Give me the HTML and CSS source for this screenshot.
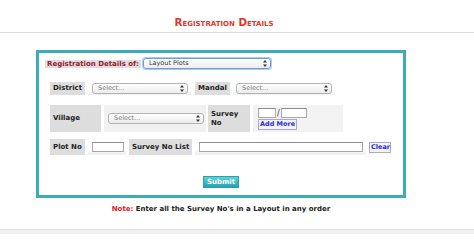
FILE: index.html
```html
<!DOCTYPE html>
<html>
<head>
<meta charset="utf-8">
<link rel="stylesheet" href="styles.css">
</head>
<body>
<header class="top">
  <h1 class="title">Registration Details</h1>
</header>
<main class="wrap">
  <form class="box">
    <div class="row-of">
      <span class="of-label">Registration Details of:</span>
      <span class="sel-wrap sel-of">
        <select class="sel focus"><option>Layout Plots</option></select>
        <svg class="arr" width="4" height="7" viewBox="0 0 4 7"><path d="M2 0L4 2.6H0Z M2 7L0 4.4H4Z" fill="#333"/></svg>
      </span>
    </div>

    <div class="row r-district">
      <div class="lab w35">District</div>
      <div class="val v-district">
        <span class="sel-wrap">
          <select class="sel"><option>Select...</option></select>
          <svg class="arr" width="4" height="7" viewBox="0 0 4 7"><path d="M2 0L4 2.6H0Z M2 7L0 4.4H4Z" fill="#333"/></svg>
        </span>
      </div>
      <div class="lab w35">Mandal</div>
      <div class="val v-mandal">
        <span class="sel-wrap">
          <select class="sel"><option>Select...</option></select>
          <svg class="arr" width="4" height="7" viewBox="0 0 4 7"><path d="M2 0L4 2.6H0Z M2 7L0 4.4H4Z" fill="#333"/></svg>
        </span>
      </div>
    </div>

    <div class="row r-village">
      <div class="lab w51">Village</div>
      <div class="val v-village">
        <span class="sel-wrap">
          <select class="sel"><option>Select...</option></select>
          <svg class="arr" width="4" height="7" viewBox="0 0 4 7"><path d="M2 0L4 2.6H0Z M2 7L0 4.4H4Z" fill="#333"/></svg>
        </span>
      </div>
      <div class="lab w42 two">Survey<br>No</div>
      <div class="val v-survey">
        <div class="pair">
          <input class="inp w18" type="text"><span class="slash">/</span><input class="inp w26" type="text">
        </div>
        <button type="button" class="btn-small">Add More</button>
      </div>
    </div>

    <div class="row r-plot">
      <div class="lab w35">Plot No</div>
      <div class="val v-plot"><input class="inp w32" type="text"></div>
      <div class="lab w63">Survey No List</div>
      <div class="val v-list"><input class="inp w164" type="text"></div>
      <button type="button" class="btn-small clear">Clear</button>
    </div>

    <div class="actions">
      <button type="button" class="submit">Submit</button>
    </div>
  </form>
  <p class="note"><span class="note-l">Note:</span> Enter all the Survey No's in a Layout in any order</p>
</main>
<footer class="foot"></footer>
</body>
</html>
```

FILE: styles.css
```css
* { box-sizing: border-box; }
html, body { margin: 0; padding: 0; background: #fff; }
body {
  width: 474px;
  height: 234px;
  overflow: hidden;
  font-family: "DejaVu Sans", Verdana, sans-serif;
  font-size: 7px;
  color: #222;
  position: relative;
}
.top {
  height: 33px;
  border-bottom: 1px solid #dcdcdc;
  display: flex;
  justify-content: center;
  align-items: flex-end;
  padding-right: 26px;
}
.title {
  margin: 0 0 4px 0;
  font-family: "DejaVu Sans", Verdana, sans-serif;
  font-weight: bold;
  font-size: 10.3px;
  line-height: 11px;
  font-variant: small-caps;
  color: #e2362a;
}
.wrap {
  margin: 17px 0 0 36px;
  width: 370px;
}
.box {
  margin: 0;
  width: 370px;
  height: 148px;
  border: 3px solid #3eabb8;
  padding: 5px 0 0 6px;
  display: flex;
  flex-direction: column;
}
.row-of {
  display: flex;
  align-items: center;
  height: 11px;
}
.of-label {
  background: #e4dcdc;
  color: #8e1f2d;
  font-weight: bold;
  height: 8px;
  line-height: 8px;
  padding: 0 2px;
  white-space: nowrap;
}
.sel-wrap {
  position: relative;
  display: inline-block;
  width: 96px;
  height: 11px;
}
.sel-wrap.sel-of { margin-left: 2px; width: 128px; }
.sel {
  -webkit-appearance: none;
  appearance: none;
  width: 100%;
  height: 100%;
  margin: 0;
  padding: 0 0 0 5px;
  border: 1px solid #b3b3b3;
  border-radius: 3px;
  background: linear-gradient(#ffffff, #ececec);
  font-family: "DejaVu Sans", Verdana, sans-serif;
  font-size: 6.5px;
  line-height: 9px;
  color: #777;
}
.sel.focus {
  border-color: #6b9fdc;
  box-shadow: 0 0 0 1px #a9c9ef;
  color: #333;
}
.arr {
  position: absolute;
  right: 4px;
  top: 2px;
}
.row {
  display: flex;
  margin-left: 5px;
}
.lab {
  background: #dddddd;
  font-weight: bold;
  color: #222;
  display: flex;
  align-items: center;
  padding-left: 3px;
  line-height: 9px;
  white-space: nowrap;
}
.w35 { width: 35px; }
.w42 { width: 42px; }
.w51 { width: 51px; }
.w63 { width: 63px; }
.val {
  background: linear-gradient(#ffffff 60%, #eeeeee);
  display: flex;
  align-items: center;
}
.r-district { margin-top: 13px; height: 13px; }
.v-district { margin: 0 3px; width: 104px; padding-left: 4px; }
.v-mandal { margin-left: 3px; width: 102px; padding-left: 3px; }
.r-village { margin-top: 10px; height: 27px; }
.v-village { margin: 0 2px 0 3px; width: 102px; padding-left: 4px; background: #f1f1f1; }
.v-survey {
  margin-left: 3px;
  width: 90px;
  background: #f3f3f3;
  flex-direction: column;
  align-items: flex-start;
  justify-content: flex-start;
  padding: 2px 0 0 5px;
}
.pair { display: flex; align-items: flex-end; height: 11px; }
.slash { font-size: 8px; line-height: 9px; padding: 0 1px; color: #333; }
.inp {
  height: 10px;
  margin: 0;
  padding: 0;
  border: 1px solid #a8a8a8;
  border-top-color: #8d8d8d;
  background: #fff;
  font-size: 6px;
}
.w18 { width: 18px; }
.w26 { width: 26px; }
.w32 { width: 32px; }
.w164 { width: 164px; }
.btn-small {
  margin: 1px 0 0 0;
  padding: 0 1px;
  height: 11px;
  border: 1px solid #a9a9c8;
  background: #f4f4fb;
  color: #2b2bd4;
  font-family: "DejaVu Sans", Verdana, sans-serif;
  font-weight: bold;
  font-size: 6.5px;
  line-height: 9px;
}
.r-plot { margin-top: 7px; height: 16px; }
.v-plot { margin: 0 3px; width: 38px; padding-left: 4px; }
.v-list { margin-left: 3px; width: 171px; padding-left: 4px; }
.clear { margin: 3px 0 0 3px; width: 22px; }
.actions {
  display: flex;
  justify-content: center;
  margin-top: 21px;
  margin-left: -6px;
}
.submit {
  width: 36px;
  height: 12px;
  margin: 0;
  padding: 0;
  border: 1px solid #2e9ea9;
  background: linear-gradient(#5dd0d8, #23a3b0);
  color: #fff;
  font-family: "DejaVu Sans", Verdana, sans-serif;
  font-weight: bold;
  font-size: 7px;
  line-height: 10px;
}
.note {
  margin: 7px 0 0 0;
  text-align: center;
  font-weight: bold;
  font-size: 7px;
  line-height: 9px;
  color: #222;
}
.note-l { color: #e4122b; }
.foot {
  position: absolute;
  left: 0;
  right: 0;
  top: 229px;
  bottom: 0;
  border-top: 1px solid #dedede;
  background: #f0f0f0;
}
```
